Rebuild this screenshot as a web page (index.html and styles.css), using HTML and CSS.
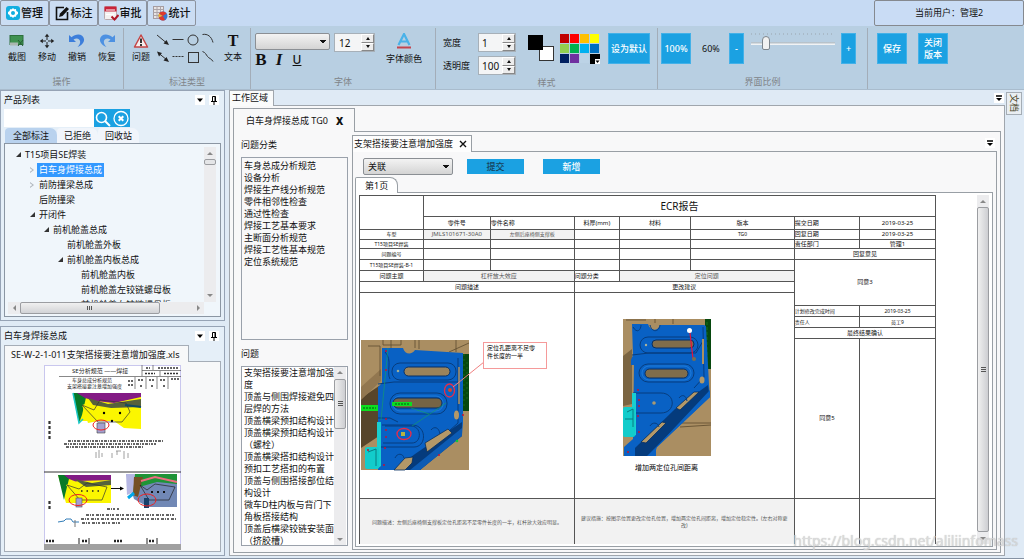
FILE: index.html
```html
<!DOCTYPE html>
<html lang="zh-CN">
<head>
<meta charset="utf-8">
<meta name="viewport" content="width=device-width, initial-scale=1">
<title>问题标注管理</title>
<link rel="stylesheet" href="styles.css">
</head>
<body>
<header class="topbar">
  <nav class="modules">
    <button class="module" type="button"><svg width="14" height="14" viewBox="0 0 14 14"><rect width="14" height="14" rx="3" fill="#12aee0"/><path d="M7 2l1.200 1.200 1.800-.1.3 1.800L12 6v2l-1.600 1-.4 1.800-1.800 0L7 12l-1.200-1.200-1.800 0L3.600 9 2 8V6l1.600-1L4 3.200l1.800 0z" fill="#fff"/><circle cx="7" cy="7" r="2" fill="#12aee0"/></svg>管理</button>
    <button class="module" type="button"><svg width="15" height="15" viewBox="0 0 15 15"><path d="M9 1.500H1.500v12h11V6" fill="none" stroke="#111" stroke-width="1.600"/><path d="M4 11l1-3.500L11.500 1l2.500 2L7.500 10z" fill="#111"/></svg>标注</button>
    <button class="module" type="button"><svg width="15" height="15" viewBox="0 0 15 15"><rect x=".5" y=".5" width="12" height="13" rx="1" fill="#f4f1f1" stroke="#b9a9ad"/><path d="M.5.500h12v5H.5z" fill="#c9223a"/><path d="M2 4h9M2 8.500h8" stroke="#fff"/><path d="M7.500 10.500l3 3 4-4.500" fill="none" stroke="#b01527" stroke-width="2"/></svg>审批</button>
    <button class="module" type="button"><svg width="15" height="15" viewBox="0 0 15 15"><rect x=".5" y=".5" width="10" height="12" fill="#e8e4e4" stroke="#a59ca0"/><path d="M.5 3.500h10M.5 6.500h10M.5 9.500h10M4 .5v12M7.500.5v12" stroke="#aca4a8"/><circle cx="10" cy="10" r="4.500" fill="#3a78d0"/><path d="M10 10L6 7.500a4.500 4.500 0 0 0-.3 4z" fill="#f0b431"/><path d="M10 10l-4.300 1.500A4.500 4.500 0 0 0 12 14z" fill="#df3a2c"/><path d="M10 10L6 7.500a4.500 4.500 0 0 1 7.500 0z" fill="#df3a2c"/></svg>统计</button>
  </nav>
  <button class="user" type="button">当前用户：管理2</button>
</header>

<section class="ribbon">
  <div class="group group-edit">
    <div class="tools">
      <button class="tool" type="button"><svg width="16" height="16" viewBox="0 0 16 16"><rect x="1" y="2.500" width="13" height="9" fill="#3f9150" stroke="#2d6f3c"/><path d="M1 9.500h8v3H1z" fill="#aab7b0"/><path d="M9 7l5 6M14 7l-5 6" stroke="#265c34"/></svg>截图</button>
      <button class="tool" type="button"><svg width="16" height="16" viewBox="0 0 16 16"><path d="M8 2v12M2 8h12" stroke="#222" stroke-dasharray="5 2"/><path d="M8 .8l2.300 3H5.700zM8 15.200l2.300-3H5.700zM.8 8l3-2.300v4.600zM15.200 8l-3-2.300v4.600z" fill="#222"/></svg>移动</button>
      <button class="tool" type="button"><svg width="18" height="16" viewBox="0 0 18 16"><path d="M1 2v7h7L5.500 6.500C9 4 13 6 12 10c-.4 1.700-1.500 3-2.500 4 4-1.500 7-4.500 6.500-8C15.400 1 8.500-.5 3.500 4.300z" fill="#3c7edb"/></svg>撤销</button>
      <button class="tool" type="button"><svg width="18" height="16" viewBox="0 0 18 16"><path d="M17 2v7h-7l2.500-2.500C9 4 5 6 6 10c.4 1.700 1.500 3 2.500 4C4.500 12.500 1.500 9.500 2 6 2.600 1 9.500-.5 14.500 4.300z" fill="#4d91e2"/></svg>恢复</button>
    </div>
    <div class="caption">操作</div>
  </div>
  <div class="group group-mark">
    <div class="tools">
      <button class="tool" type="button"><svg width="16" height="16" viewBox="0 0 16 16"><path d="M8 2l6.500 12h-13z" fill="#f5eded" stroke="#c44545" stroke-width="1.500" stroke-linejoin="round"/><path d="M8 5.500v4.500M8 11v2" stroke="#222" stroke-width="1.800"/></svg>问题</button>
      <div class="shapes">
        <button type="button" aria-label="箭头"><svg width="14" height="14" viewBox="0 0 14 14"><path d="M1 2l9 7.500" stroke="#333"/><path d="M13 12L7.500 10.500l3-3.500z" fill="#222"/></svg></button>
        <button type="button" aria-label="直线"><svg width="14" height="14" viewBox="0 0 14 14"><path d="M1.500 6.500h11" stroke="#333"/></svg></button>
        <button type="button" aria-label="圆"><svg width="14" height="14" viewBox="0 0 14 14"><circle cx="7" cy="7" r="5" fill="none" stroke="#333"/></svg></button>
        <button type="button" aria-label="弧线"><svg width="14" height="14" viewBox="0 0 14 14"><path d="M1.500 1.500c5-1 9 2 10.500 8" fill="none" stroke="#333"/></svg></button>
        <button type="button" aria-label="双向箭头"><svg width="14" height="14" viewBox="0 0 14 14"><path d="M3 3.500l8 6.500" stroke="#333"/><path d="M13 12L7.500 10.500l3-3.500zM1 1.500l5 1.500-3 3.500z" fill="#222"/></svg></button>
        <button type="button" aria-label="虚线"><svg width="14" height="14" viewBox="0 0 14 14"><path d="M1.500 6.500h11" stroke="#333" stroke-dasharray="2 1"/></svg></button>
        <button type="button" aria-label="矩形"><svg width="14" height="14" viewBox="0 0 14 14"><rect x="2.500" y="2.500" width="10" height="10" fill="none" stroke="#333"/></svg></button>
        <button type="button" aria-label="曲线"><svg width="14" height="14" viewBox="0 0 14 14"><path d="M1.500 1.500c3 1 3.500 3 5 5s4 2 5.500 5" fill="none" stroke="#333"/></svg></button>
      </div>
      <button class="tool" type="button"><span class="serif-t">T</span>文本</button>
    </div>
    <div class="caption">标注类型</div>
  </div>
  <div class="group group-font">
    <div class="tools">
      <div class="font-box">
        <div class="inline">
          <select class="combo font-name" aria-label="字体"><option></option></select>
          <span class="spin"><input type="text" value="12" aria-label="字号"><span class="steps"><button type="button" aria-label="增大"></button><button type="button" class="down" aria-label="减小"></button></span></span>
        </div>
        <div class="biu"><button type="button"><b>B</b></button><button type="button"><i>I</i></button><button type="button" class="under"><u>U</u></button></div>
      </div>
      <button class="tool font-color" type="button"><svg width="16" height="16" viewBox="0 0 16 16"><path d="M2.500 12L8 1l5.500 11M4.500 8.500h7" fill="none" stroke="#4ab2e8" stroke-width="2.200"/><path d="M1 14.500h14" stroke="#c3454f" stroke-width="2"/></svg>字体颜色</button>
    </div>
    <div class="caption">字体</div>
  </div>
  <div class="group group-style">
    <div class="tools">
      <div class="measures">
        <label for="w">宽度</label><span class="spin"><input id="w" type="text" value="1"><span class="steps"><button type="button" aria-label="增大"></button><button type="button" class="down" aria-label="减小"></button></span></span>
        <label for="o">透明度</label><span class="spin"><input id="o" type="text" value="100"><span class="steps"><button type="button" aria-label="增大"></button><button type="button" class="down" aria-label="减小"></button></span></span>
      </div>
      <svg class="fore-back" width="27" height="27" viewBox="0 0 27 27"><rect x="11.500" y="11.500" width="14" height="14" fill="#fff" stroke="#333"/><rect width="15" height="15" fill="#000"/></svg>
      <div class="swatches">
        <button type="button" class="c1" aria-label="深红"></button><button type="button" class="c2" aria-label="红"></button><button type="button" class="c3" aria-label="橙"></button><button type="button" class="c4" aria-label="黄"></button>
        <button type="button" class="c5" aria-label="浅绿"></button><button type="button" class="c6" aria-label="绿"></button><button type="button" class="c7" aria-label="浅蓝"></button><button type="button" class="c8" aria-label="蓝"></button>
        <button type="button" class="c9" aria-label="深蓝"></button><button type="button" class="c10" aria-label="紫"></button><button type="button" class="c11" aria-label="透明"></button><button type="button" class="c12" aria-label="更多颜色"><svg width="10" height="10" viewBox="0 0 10 10"><rect width="10" height="10" fill="#000"/><rect x="5" y="5" width="5" height="5" fill="#fff"/><path d="M5.500 6.500h4l-2 2.500z"/></svg></button>
      </div>
      <button class="blue wide" type="button">设为默认</button>
    </div>
    <div class="caption">样式</div>
  </div>
  <div class="group group-zoom">
    <div class="tools">
      <button class="blue" type="button">100%</button>
      <output class="percent">60%</output>
      <button class="blue thin" type="button">-</button>
      <input class="slider" type="range" min="0" max="100" value="14" aria-label="界面比例">
      <button class="blue thin" type="button">+</button>
    </div>
    <div class="caption">界面比例</div>
  </div>
  <div class="group group-save">
    <div class="tools">
      <button class="blue" type="button">保存</button>
      <button class="blue" type="button">关闭<br>版本</button>
    </div>
  </div>
</section>

<main class="workspace">
  <aside class="side">
    <section class="panel">
      <div class="panel-head"><h2>产品列表</h2>
        <button class="mini" type="button" aria-label="菜单"><svg width="10" height="10" viewBox="0 0 10 10"><path d="M2 3.500h6L5 7z"/></svg></button>
        <button class="mini" type="button" aria-label="固定"><svg width="10" height="10" viewBox="0 0 10 10"><path d="M3.500 6V1.500h3V6M2 6.500h6M5 6.500V10" fill="none" stroke="#000"/><path d="M6 1.500V6" stroke="#000"/></svg></button>
      </div>
      <div class="search"><input type="text" aria-label="搜索"><button type="button" aria-label="搜索"><svg width="18" height="17" viewBox="0 0 18 17"><circle cx="7.500" cy="7.500" r="5" fill="none" stroke="#fff" stroke-width="1.600"/><path d="M11 11l5 5" stroke="#fff" stroke-width="2"/></svg></button><button type="button" aria-label="清除"><svg width="18" height="17" viewBox="0 0 18 17"><circle cx="9" cy="8.500" r="7" fill="none" stroke="#fff" stroke-width="1.300"/><path d="M6.700 6.200l4.600 4.600M11.300 6.200l-4.600 4.600" stroke="#fff" stroke-width="2"/></svg></button></div>
      <div class="pills" role="tablist"><button class="on" type="button" role="tab">全部标注</button><button type="button" role="tab">已拒绝</button><button type="button" role="tab">回收站</button></div>
      <div class="tree-box">
        <ul class="tree">
          <li><span class="node open">T15项目SE焊装</span>
            <ul>
              <li><span class="node closed"><mark>白车身焊接总成</mark></span></li>
              <li><span class="node closed">前防撞梁总成</span></li>
              <li><span class="node">后防撞梁</span></li>
              <li><span class="node open">开闭件</span>
                <ul>
                  <li><span class="node open">前机舱盖总成</span>
                    <ul>
                      <li><span class="node">前机舱盖外板</span></li>
                      <li><span class="node open">前机舱盖内板总成</span>
                        <ul>
                          <li><span class="node">前机舱盖内板</span></li>
                          <li><span class="node">前机舱盖左铰链螺母板</span></li>
                          <li><span class="node">前机舱盖右铰链螺母板</span></li>
                        </ul>
                      </li>
                    </ul>
                  </li>
                </ul>
              </li>
            </ul>
          </li>
        </ul>
        <div class="vbar tree-v"><i class="up"></i><b></b><i class="dn"></i></div>
        <div class="hbar"><i class="lt"></i><b></b><i class="rt"></i></div>
      </div>
    </section>

    <section class="panel">
      <div class="panel-head"><h2>白车身焊接总成</h2>
        <button class="mini" type="button" aria-label="菜单"><svg width="10" height="10" viewBox="0 0 10 10"><path d="M2 3.500h6L5 7z"/></svg></button>
        <button class="mini" type="button" aria-label="固定"><svg width="10" height="10" viewBox="0 0 10 10"><path d="M3.500 6V1.500h3V6M2 6.500h6M5 6.500V10" fill="none" stroke="#000"/><path d="M6 1.500V6" stroke="#000"/></svg></button>
      </div>
      <div class="file-tab">SE-W-2-1-011支架搭接要注意增加强度.xls</div>
      <div class="preview">
        <svg width="137" height="185" viewBox="0 0 137 185">
          <rect x=".5" y=".5" width="136" height="184" fill="#fff" stroke="#c9c7ee"/>
          <rect y="179" width="137" height="6" fill="#a0a0a0"/>
          <g class="doc-text"><text x="28" y="8" font-size="6">SE分析规范 ——焊接</text><text x="28" y="17" font-size="5">车身总成分析规范</text><text x="23" y="23" font-size="5">支架搭接要注意增加强度</text></g>
          <path d="M15 11.500h122M98 0v11M98 5.500h39M109 0v5M116 6v5M91 12v12M102 12v12M113 12v12M124 12v12" stroke="#555" stroke-width=".7" fill="none"/>
          <path d="M102 3h4M114 3h20M101 8.500h10M120 8.500h14M84 16h5M94 15h6M105 15h6M116 15h6M127 14h8M84 20h5M96 21h2M107 21h2M119 21h2" stroke="#333" stroke-width="1.400" stroke-dasharray="2 1"/>
          <g>
            <path d="M29 28h68v28H35z" fill="#fbf600"/>
            <path d="M29 28h14l-5 22-3 8z" fill="#087a28"/>
            <path d="M33 28h64v9l-36 2-20-6z" fill="#831b85"/>
            <path d="M29 28l6 30 4-4" fill="none" stroke="#1dc8c8" stroke-width="1.500"/>
            <path d="M38 40l14-4 18 2 27-6v32l-17-1-10-7H54l-10 2z" fill="#fbf600"/>
            <path d="M44 33l20 6 33-5v8l-30 1-18-3" fill="#57623c"/>
            <path d="M38 40l16 17h24l8-10-4-9-26-3-6 10z" fill="none" stroke="#333" stroke-width=".7"/>
            <circle cx="60" cy="48" r="1.200"/><circle cx="76" cy="48" r="1.200"/><circle cx="68" cy="56" r="1.200"/><path d="M81 40l16 2" stroke="#124b63" stroke-width="2"/>
            <path d="M53 58h8v10h-8z" fill="#a4a0d0" stroke="#444" stroke-width=".6"/>
            <ellipse cx="57" cy="60" rx="8" ry="5" fill="none" stroke="#f02020"/>
          </g>
          <path d="M24 76h95M20 79h92M22 82h78" stroke="#333" stroke-width="1.600" stroke-dasharray="3 1 1 1 2 1"/>
          <path d="M52 87v6M55 85v8M58 88v4M68 88v5M72 86h5M73 86v4M80 86v8M84 88v5" stroke="#888" stroke-width=".8"/>
          <path d="M5.500 56v18M5.500 136v10" stroke="#333" stroke-width="2.200" stroke-dasharray="3 2"/>
          <path d="M0 107h137" stroke="#333"/>
          <g>
            <path d="M14 110h53v28H22z" fill="#fbf600"/><path d="M14 110h12l-5 20-1 5z" fill="#087a28"/><path d="M20 110h47v7l-26 3-16-6z" fill="#831b85"/>
            <path d="M22 120l12-4 33-1v22H40l-10-4z" fill="#fbf600"/><path d="M30 114l18 4 19-3v5l-25 2z" fill="#57623c"/>
            <path d="M23 120l13 15h22l5-13-20-4-8 6z" fill="none" stroke="#333" stroke-width=".7"/><path d="M37 126h18" stroke="#222" stroke-width="1.500" stroke-dasharray="1.500 4"/>
            <rect x="32" y="133" width="6" height="9" fill="#a4a0d0" stroke="#555" stroke-width=".6"/><ellipse cx="34" cy="135" rx="9" ry="5.500" fill="none" stroke="#f02020"/>
          </g>
          <path d="M67 123.500h10" stroke="#111"/><path d="M80 123.500l-4-2v4z"/>
          <g>
            <path d="M82 109h51v33H104l-14-8z" fill="#7188b5"/><path d="M82 109h10v17l-9 4z" fill="#b6b7e2"/><path d="M91 109h42v10l-20-2-18 5-6 8z" fill="#1e9436"/><path d="M90 112h9l-5 20-5-2z" fill="#765024"/>
            <path d="M97 116l14-4 22 5" fill="none" stroke="#ee6c80" stroke-width="2"/><path d="M84 133l6-5" stroke="#00a7e8" stroke-width="3"/>
            <path d="M96 120l9 15h20l6-13-20-3-8 6z" fill="none" stroke="#222" stroke-width=".7"/><path d="M107 127h18" stroke="#111" stroke-width="2" stroke-dasharray="2 4"/>
            <rect x="100" y="133" width="5" height="10" fill="#18406a"/><ellipse cx="103" cy="135" rx="9" ry="6" fill="none" stroke="#f02020"/>
          </g>
          <path d="M42 150h88M37 154h95M38 158h40M63 144h12" stroke="#333" stroke-width="1.400" stroke-dasharray="3 1 1 1 2 2"/>
          <path d="M14 157l6-1 2-2h5l2 3h6" fill="none" stroke="#327db8"/><path d="M31 155v7" stroke="#777"/>
          <path d="M35 173v6M45 173v6M103 173v6M113 173v6" stroke="#222"/><path d="M2 176h9M38 176h5M70 176h8M105 176h5" stroke="#222" stroke-width="2.500" stroke-dasharray="2 1"/>
        </svg>
      </div>
    </section>
  </aside>

  <section class="area">
    <div class="area-tabs"><span class="area-tab">工作区域</span><button class="overflow" type="button" aria-label="更多"><svg width="10" height="10" viewBox="0 0 10 10"><path d="M2 3h6" stroke="#000" stroke-width="1.500"/><path d="M2 5h6L5 8z"/></svg></button></div>
    <div class="area-body">
      <div class="doc-tab">白车身焊接总成 TG0<button type="button" aria-label="关闭">X</button></div>
      <div class="doc-body">
        <div class="lists">
          <h3>问题分类</h3>
          <ul class="listbox">
            <li>车身总成分析规范</li><li>设备分析</li><li>焊接生产线分析规范</li><li>零件相邻性检查</li><li>通过性检查</li><li>焊接工艺基本要求</li><li>主断面分析规范</li><li>焊接工艺性基本规范</li><li>定位系统规范</li>
          </ul>
          <h3>问题</h3>
          <div class="listbox scrolled">
            <ul>
              <li>支架搭接要注意增加强度</li><li>顶盖与侧围焊接避免四层焊的方法</li><li>顶盖横梁预扣结构设计</li><li>顶盖横梁预扣结构设计（螺栓）</li><li>顶盖横梁搭扣结构设计</li><li>预扣工艺搭扣的布置</li><li>顶盖与侧围搭接部位结构设计</li><li>微车D柱内板与背门下角板搭接结构</li><li>顶盖后横梁铰链安装面（挤胶槽）</li>
            </ul>
            <div class="vbar list-v"><i class="up"></i><b></b><i class="dn"></i></div>
          </div>
        </div>

        <div class="issue">
          <div class="issue-tabs"><span class="issue-tab">支架搭接要注意增加强度<button type="button" aria-label="关闭"><svg width="8" height="8" viewBox="0 0 8 8"><path d="M1 1l6 6M7 1L1 7" stroke="#111" stroke-width="1.400"/></svg></button></span><button class="overflow" type="button" aria-label="更多"><svg width="10" height="10" viewBox="0 0 10 10"><path d="M2 3h6" stroke="#000" stroke-width="1.500"/><path d="M2 5h6L5 8z"/></svg></button></div>
          <div class="issue-body">
            <div class="actions"><select class="combo" aria-label="关联"><option>关联</option></select><button class="act dark" type="button">提交</button><button class="act" type="button">新增</button></div>
            <div class="page-tab">第1页</div>
            <div class="page">
              <div class="sheet">
                <table>
                  <colgroup><col class="k1"><col class="k2"><col class="k3"><col class="k4"><col class="k5"><col class="k6"><col class="k7"><col class="k8"></colgroup>
                  <tr class="h21"><td rowspan="2"></td><th class="title" colspan="7">ECR报告</th></tr>
                  <tr class="h13"><td>零件号</td><td class="l">零件名称</td><td>料厚(mm)</td><td>材料</td><td>版本</td><td class="l">提交日期</td><td>2019-03-25</td></tr>
                  <tr class="h10"><td class="s">车型</td><td class="g">JMLS101671-30A0</td><td class="g s">左侧后座椅侧支撑板</td><td></td><td></td><td class="s">TG0</td><td class="l">回复日期</td><td>2019-03-25</td></tr>
                  <tr class="h9"><td class="s">T15项目SE焊装</td><td></td><td></td><td></td><td></td><td></td><td class="l">责任部门</td><td>管理1</td></tr>
                  <tr class="h11"><td class="s">问题编号</td><td></td><td></td><td></td><td></td><td></td><td colspan="2">回复意见</td></tr>
                  <tr class="h11"><td class="s">T15项目SE焊装-B-1</td><td></td><td></td><td></td><td></td><td></td><td colspan="2" rowspan="4">同意3</td></tr>
                  <tr class="h11"><td>问题主题</td><td class="g" colspan="2">杠杆放大效应</td><td class="l">问题分类</td><td class="g" colspan="2">定位问题</td></tr>
                  <tr class="h11"><td colspan="3">问题描述</td><td colspan="3">更改建议</td></tr>
                  <tr class="h13">
                    <td class="pic" colspan="3" rowspan="5">
                      <svg width="213" height="204" viewBox="0 0 213 204">
                        <g transform="translate(1 47)">
                          <rect width="108" height="130" fill="#aa8e62"/>
                          <path d="M0 58l18-12v50L0 108z" fill="#57452b"/><path d="M0 47l20-18v12L0 60z" fill="#927750"/>
                          <path d="M7 6h12v30M30 0v8M54 0v8M58 0v9M88 12l20-9M95 0v12M22 0v5h18V0" fill="none" stroke="#5e4c30" stroke-width=".8"/>
                          <path d="M101 14h7v57h-7z" fill="#07480e"/><path d="M103 14v54M106 22v40" stroke="#146b1b" stroke-dasharray="2 3"/>
                          <path d="M21 8l21 0c2 7 9 7 12 2l48 3v70l-1 12-15 11-27 24H17V47l4-4z" fill="#0961c4"/>
                          <path d="M101 82L54 114 33 130h26l27-22 15-12z" fill="#053b7c"/><path d="M59 130l42-34v-8l-52 42z" fill="#0c5bb4"/>
                          <path d="M64 103l23-14 4 4-25 19zM33 130l11-12 8-1-1 6-7 7z" fill="#b39868" stroke="#062e60" stroke-width=".8"/>
                          <g fill="none" stroke="#073d7e"><rect x="31" y="23" width="64" height="17" rx="8"/><rect x="29" y="53" width="57" height="21" rx="10"/><rect x="32" y="56" width="50" height="15" rx="7" stroke="#2d8de8" stroke-width=".6"/><path d="M17 44l16-2h66M21 85h30c15 0 15 22 2 22H17M24 12c8 8 1 20 5 27M97 18v65l-9 8M24 86h26c11 0 11 17 1 17H22M17 78h12l8 4M70 90c3-4 8-3 9 4M34 118c2-5 8-5 9 0"/></g>
                          <rect x="43" y="27" width="46" height="9" rx="4.500" fill="#9a835b" stroke="#062f64"/><rect x="32" y="58" width="49" height="10" rx="5" fill="#756444" stroke="#062f64"/>
                          <path d="M98 27v37" stroke="#ad9160" stroke-width="1.500"/><ellipse cx="95.500" cy="75" rx="2.500" ry="4.500" fill="#b39868"/>
                          <path d="M16 82h4v44l-4 3z" fill="#19cfd0"/><rect x="4" y="107" width="14" height="22" rx="2" fill="#12cccb"/><path d="M7 112l8-3v17" fill="none" stroke="#087d82"/>
                          <path d="M27 8L20 80M85 63L51 86M50 68l18 6" stroke="#16a35f" stroke-width=".6"/>
                          <rect y="65" width="17" height="6" fill="#0cdd20"/><path d="M2 68h13" stroke="#07500e" stroke-dasharray="2 1"/><rect x="31" y="62" width="20" height="4" fill="#0cdd20"/><path d="M34 64h14" stroke="#07500e" stroke-dasharray="2 1"/>
                          <g fill="#c01334"><circle cx="25" cy="11" r="1"/><circle cx="25" cy="30" r="1"/><circle cx="25" cy="79" r="1"/><circle cx="25" cy="90" r="1"/><circle cx="25" cy="97" r="1"/><circle cx="24" cy="108" r="1"/><circle cx="23" cy="125" r="1"/><circle cx="78" cy="115" r="1"/><circle cx="102" cy="75" r="1"/><circle cx="7" cy="110" r="1"/></g><circle cx="96" cy="101" r="1.300" fill="#10c93b"/><circle cx="37" cy="31" r="1.300" fill="#9bae9b"/>
                          <rect x="40" y="92" width="4" height="4" fill="#b5b342"/><ellipse cx="43" cy="94" rx="7" ry="5.500" fill="none" stroke="#e82c48" stroke-width="1.300"/><circle cx="89" cy="50" r="2" fill="#e04020"/><ellipse cx="88.500" cy="50.500" rx="5" ry="6.500" fill="none" stroke="#e82c48" stroke-width="1.300"/>
                        </g>
                        <path d="M93 94l31-25" stroke="#f08080"/><rect x="123.500" y="49.500" width="63" height="26" fill="#fff" stroke="#f59a9a"/>
                        <text x="127" y="57" font-size="6">定位孔距离不足零</text><text x="127" y="65" font-size="6">件长度的一半</text>
                      </svg>
                    </td>
                    <td class="pic" colspan="3" rowspan="5">
                      <svg width="218" height="204" viewBox="0 0 218 204">
                        <g transform="translate(48 26)">
                          <rect width="88" height="137" fill="#aa8e62"/>
                          <path d="M0 37l9-7v55l-9 2z" fill="#7b6542"/><path d="M3 1h20M32 0v4M50 0v5M57 104h31M57 108l31-2" fill="none" stroke="#6c5737"/>
                          <path d="M82 0h6v50h-6z" fill="#07480e"/><path d="M84 3v44" stroke="#176e1d" stroke-dasharray="3 2"/>
                          <path d="M9 5h16c2 7 10 8 12 1l44 0 2 1 3 59 1 12-53 50-3 9H1v-9l9-8 1-74H8V41l2-5z" fill="#0961c4"/>
                          <path d="M85 66L52 90 12 129v8h12l33-33 29-30z" fill="#053b7c"/><path d="M33 137l0-8 54-51v-7L25 137z" fill="#0a62c4"/>
                          <path d="M53 89l18-16h5L57 91zM18 123l21-20 4 1-20 20z" fill="#b39868" stroke="#062e60" stroke-width=".8"/>
                          <g fill="none" stroke="#073d7e"><rect x="17" y="18" width="58" height="16" rx="8"/><rect x="16" y="45" width="55" height="18" rx="9"/><rect x="19" y="47" width="49" height="14" rx="7" stroke="#2d8de8" stroke-width=".6"/><path d="M9 36l17-2h47l7-12M10 74h28c15 0 15 20 0 20H12M27 6c2 8 9 7 10 0M80 8l1 50-10 11M10 8c4 7 8 3 8-2M56 79c3-4 7-3 8 3M27 107c2-4 8-4 9 1"/></g>
                          <rect x="29" y="21" width="42" height="8" rx="4" fill="#806d4b" stroke="#062f64"/><rect x="22" y="50" width="43" height="9" rx="4.500" fill="#806d4b" stroke="#062f64"/>
                          <path d="M80 20v25" stroke="#ad9160" stroke-width="2"/><ellipse cx="79" cy="61" rx="2.500" ry="3.500" fill="#b39868"/>
                          <path d="M9 74h4v42l-4 2z" fill="#19cfd0"/><rect y="88" width="12" height="30" rx="2" fill="#12cccb"/><path d="M4 93l6-3v18M2 100h8" fill="none" stroke="#087d82"/>
                          <path d="M67 14l3 26" stroke="#e5143c" stroke-width="1.200"/><circle cx="66.500" cy="11.500" r="2.500" fill="#fff"/><circle cx="71" cy="40" r="2" fill="#786d51"/><circle cx="31" cy="84" r="1.800" fill="#aa9a72"/><circle cx="23" cy="26" r="1.200" fill="#aab29a"/>
                          <g fill="#c01334"><circle cx="15" cy="71" r="1"/><circle cx="16" cy="81" r="1"/><circle cx="16" cy="87" r="1"/><circle cx="15" cy="97" r="1"/><circle cx="16" cy="113" r="1"/><circle cx="5" cy="133" r="1"/></g>
                        </g>
                        <text x="60" y="177" font-size="7">增加两定位孔间距离</text>
                      </svg>
                    </td>
                  </tr>
                  <tr class="h11"><td class="l s">计划修改完成时间</td><td class="s">2019-03-25</td></tr>
                  <tr class="h11"><td class="l s">责任人</td><td class="s">员工9</td></tr>
                  <tr class="h11"><td colspan="2">最终结果确认</td></tr>
                  <tr class="h160"><td>同意5</td><td></td></tr>
                  <tr class="h47"><td class="g s" colspan="3">问题描述：左侧后座椅侧支撑板定位孔距离不足零件长度的一半，杠杆放大效应明显。</td><td class="g s" colspan="3">建议措施：按图示位置更改定位孔位置，增加两定位孔间距离，增加定位稳定性。(左右对称更改)</td><td></td><td></td></tr>
                </table>
              </div>
              <div class="vbar page-v"><i class="up"></i><b></b><i class="dn"></i></div>
            </div>
          </div>
        </div>
      </div>
    </div>
  </section>

  <aside class="dock"><button type="button">文档</button></aside>
</main>
<div class="watermark">https://blog.csdn.net/aliliinfomass</div>
</body>
</html>
```
FILE: styles.css
```css
* { box-sizing: border-box; }
html, body { height: 100%; margin: 0; }
body {
  display: flex;
  flex-direction: column;
  position: relative;
  overflow: hidden;
  background: #dfeaf5;
  color: #111;
  font-family: "Noto Sans", "Noto Sans CJK SC", sans-serif;
  font-size: 9px;
  line-height: 12px;
}
button, input, select { font: inherit; color: inherit; margin: 0; padding: 0; }
button { border: 0; background: none; }
h2, h3 { margin: 0; font-size: 9px; font-weight: 400; }
ul { list-style: none; margin: 0; padding: 0; }
svg { display: block; flex: none; }
.inline { display: flex; gap: 4px; }

/* top bar */
.topbar { display: flex; justify-content: space-between; flex: none; height: 26px; background: #c6daf3; }
.modules { display: flex; }
.module {
  display: flex; align-items: center; justify-content: center; gap: 1px;
  width: 49px; height: 26px;
  border: 1px solid #8c939e; border-radius: 2px;
  background: #cbddf3; font-size: 11px; font-weight: 500;
}
.user { width: 150px; border: 1px solid #85898f; border-radius: 2px; background: #c9dcf5; }

/* ribbon */
.ribbon { display: flex; flex: none; height: 64px; padding-top: 2px; background: #b8cfe2; border-bottom: 1px solid #a9bccd; }
.group { display: flex; flex-direction: column; justify-content: space-between; border-right: 1px solid #a3adb8; padding-top: 5px; }
.group-edit { width: 124px; }
.group-mark { width: 127px; }
.group-font { width: 185px; }
.group-style { width: 222px; }
.group-zoom { width: 210px; }
.group-save { flex: 1; border-right: 0; }
.tools { display: flex; align-items: flex-start; }
.caption { text-align: center; color: #808488; line-height: 15px; }
.tool { display: flex; flex-direction: column; align-items: center; gap: 1px; width: 30px; line-height: 14px; }
.group-edit .tools { padding-left: 2px; }
.group-mark .tools { padding-left: 2px; }
.shapes { display: grid; grid-template-columns: repeat(4, 15px); row-gap: 3px; width: 60px; }
.group-mark .tool:first-child { width: 30px; }
.group-mark .tool:last-child { width: 34px; }
.serif-t { font: bold 16px/16px "Liberation Serif", serif; }
.combo {
  appearance: none;
  width: 90px; height: 17px; padding: 0 4px;
  border: 1px solid #8b8f94; border-radius: 2px;
  background:
    linear-gradient(to bottom right, #111 50%, transparent 51%) right 3px center / 3px 4px no-repeat,
    linear-gradient(to bottom left, #111 50%, transparent 51%) right 6px center / 3px 4px no-repeat,
    linear-gradient(#f3f3f3, #d4d4d4);
}
.combo.font-name { width: 75px; }
.group-font .tools { padding-left: 4px; }
.group-font .tool { width: 40px; margin-left: 9px; gap: 3px; }
.spin { display: flex; width: 41px; height: 19px; border: 1px solid #a7b0b8; background: #f4f5f6; }
.spin input { flex: 1; min-width: 0; border: 0; padding-left: 4px; background: none; font-size: 10px; }
.steps { display: flex; flex-direction: column; flex: none; width: 13px; }
.steps button { flex: 1; border: 1px solid; border-color: #fff #888 #888 #fff; background: #ececec; display: grid; place-items: center; }
.steps button::before { content: ""; border: 2px solid transparent; border-top: 0; border-bottom: 3px solid #111; }
.steps .down::before { border-top: 3px solid #111; border-bottom: 0; }
.biu { display: flex; gap: 6px; font: 700 17px/16px "Liberation Serif", serif; }
.biu button { width: 12px; font: inherit; }
.biu .under { font: 500 12px/16px "Noto Sans", sans-serif; }
.measures { display: grid; grid-template-columns: 35px 38px; row-gap: 4px; align-items: center; padding-left: 7px; }
.measures .spin { width: 38px; }
.measures .spin input { padding-left: 3px; }
.fore-back { margin: 2px 0 0 12px; }
.swatches { display: grid; grid-template-columns: repeat(4, 9px); grid-auto-rows: 9px; gap: 1px; margin: 1px 0 0 5px; }
.c1 { background: #c00000; } .c2 { background: #ff0000; } .c3 { background: #ffc000; } .c4 { background: #ffff00; }
.c5 { background: #92d050; } .c6 { background: #00b050; } .c7 { background: #00b0f0; } .c8 { background: #0070c0; }
.c9 { background: #002060; } .c10 { background: #7030a0; } .c11 { background: #bcd3e6; } .c12 { background: #000; }
.blue { width: 30px; height: 31px; flex: none; background: #1ba1e2; color: #fff; font-weight: 500; border: 1px solid #43b1e8; }
.blue.wide { width: 42px; margin-left: 9px; }
.blue.thin { width: 15px; }
.group-zoom .tools { padding-left: 3px; }
.percent { width: 38px; padding-left: 11px; line-height: 31px; }
.slider {
  appearance: none; width: 84px; height: 18px; margin: 0 6px 0 7px;
  background:
    linear-gradient(#a9b6c0, #fff) left 9px / 100% 3px no-repeat,
    repeating-linear-gradient(90deg, #a9bac8 0 1px, transparent 1px 4px) 0 0 / 100% 2px no-repeat;
}
.slider::-webkit-slider-thumb { appearance: none; width: 8px; height: 14px; margin-top: 1px; border: 1px solid #7d858c; border-radius: 4px 4px 2px 2px; background: #f1f1f1; }
.group-save .tools { gap: 11px; padding-left: 9px; }

/* workspace */
.workspace { display: flex; flex: 1; min-height: 0; padding-bottom: 2px; border-bottom: 1px solid #8592a3; }
.side { display: flex; flex-direction: column; gap: 5px; width: 225px; flex: none; }
.panel { display: flex; flex-direction: column; flex: 1; min-height: 0; padding: 0 3px 3px; border: 1px solid #96a3b5; background: #e5eff8; }
.panel-head { display: flex; align-items: center; gap: 4px; flex: none; height: 18px; padding-right: 2px; }
.panel-head h2 { flex: 1; }
.mini { width: 10px; height: 10px; background: #fff; }
.search { display: flex; flex: none; height: 18px; width: 126px; background: #1ba1e2; }
.search input { flex: 1; min-width: 0; border: 0; background: #fff; }
.pills { display: flex; flex: none; padding: 1px 0 0 1px; }
.pills button { height: 15px; padding: 0 7px; background: #f1f5fb; border-radius: 4px 7px 0 0; }
.pills .on { padding: 0 8px; background: #b9d2ee; }
.tree-box {
  display: grid; grid-template: 1fr 12px / 1fr 13px; flex: 1; min-height: 0;
  padding: 3px 3px 2px; border: 1px solid #8b96a3; background: #f0f6fb;
}
.tree { overflow: hidden; min-height: 0; padding-left: 5px; }
.tree ul { padding-left: 14px; }
.node { position: relative; display: block; padding-left: 12px; line-height: 15px; white-space: nowrap; }
.node mark { display: inline-block; margin-left: -2px; padding: 0 2px; line-height: 14px; background: #3399ff; color: #fff; }
.node::before { position: absolute; left: 3px; top: 5px; }
.open::before { content: ""; border-left: 5px solid transparent; border-bottom: 5px solid #333; }
.closed::before { content: ""; width: 4px; height: 6px; background: #b0b6bd; clip-path: polygon(0 0, 100% 50%, 0 100%, 0 80%, 60% 50%, 0 20%); }

/* scroll bars */
.vbar { display: flex; flex-direction: column; align-items: center; width: 12px; background: #ececee; }
.vbar b, .hbar b { display: block; border: 1px solid #9b9da1; border-radius: 2px; background: #e4e5e7; }
.vbar b { width: 12px; }
.vbar .dn { margin-top: auto; }
.vbar i, .hbar i { display: grid; place-items: center; width: 12px; height: 12px; flex: none; }
.vbar i::before, .hbar i::before { content: ""; border: 3px solid transparent; }
.vbar .up::before { border-top: 0; border-bottom-color: #888; }
.vbar .dn::before { border-bottom: 0; border-top-color: #888; }
.hbar .lt::before { border-left: 0; border-right-color: #888; }
.hbar .rt::before { border-right: 0; border-left-color: #888; }
.hbar { display: flex; align-items: center; background: #ececee; }
.hbar b { width: 140px; height: 12px; background: repeating-linear-gradient(90deg, #555 0 1px, transparent 1px 2px) center / 6px 4px no-repeat, linear-gradient(#f0f0f0, #d2d3d6); }
.hbar .rt { margin-left: auto; }
.tree-v b { height: 6px; }
.list-v b { height: 50px; background: repeating-linear-gradient(#555 0 1px, transparent 1px 2px) center / 5px 6px no-repeat, linear-gradient(90deg, #f0f0f0, #cdced2); }
.page-v b { flex: 1; background: repeating-linear-gradient(#555 0 1px, transparent 1px 2px) center / 5px 6px no-repeat, linear-gradient(90deg, #f0f0f0, #cdced2); }

/* document preview */
.file-tab { align-self: flex-start; height: 17px; padding: 0 9px 0 6px; margin-bottom: -1px; z-index: 1; border: 1px solid #a5adb7; border-bottom: 0; background: #f7f8f9; line-height: 17px; }
.preview { flex: 1; min-height: 0; padding: 3px 0 0; display: flex; justify-content: center; align-items: flex-start; overflow: hidden; border: 1px solid #a5adb7; background: #f7f8f9; }
.doc-text { fill: #222; }

/* work area */
.area { display: flex; flex-direction: column; flex: 1; min-width: 0; margin-left: 4px; }
.area-tabs { display: flex; justify-content: space-between; align-items: flex-start; flex: none; height: 15px; }
.area-tab { z-index: 1; height: 16px; padding: 0 5px 0 2px; border: 1px solid #a0a6ad; border-bottom: 0; background: #fafbfb; line-height: 14px; }
.overflow { margin: 3px 1px 0 0; background: #fff; }
.area-body { display: flex; flex-direction: column; flex: 1; min-height: 0; padding: 2px 3px 2px; border: 1px solid #a0a6ad; background: #f8f8f9; }
.doc-tab { align-self: flex-start; z-index: 1; display: flex; align-items: center; gap: 8px; height: 24px; margin-bottom: -1px; padding: 0 11px 0 12px; border: 1px solid #999fa5; border-bottom: 0; background: #f8f8f9; }
.doc-tab button { font-weight: 900; font-size: 10px; }
.doc-body { display: flex; gap: 4px; flex: 1; min-height: 0; padding: 3px 3px 2px 7px; border: 1px solid #999fa5; }
.lists { display: flex; flex-direction: column; width: 107px; flex: none; padding-bottom: 4px; }
.lists h3 { flex: none; padding-bottom: 2px; line-height: 20px; }
.listbox { flex: 1 1 0; min-height: 0; overflow: hidden; border: 1px solid #9aa1ab; padding: 2px 2px 0; }
.lists h3:not(:first-child) { margin-top: 4px; }
.listbox.scrolled { display: flex; padding: 0 1px 0 2px; background: #fff; }
.scrolled ul { flex: 1; min-width: 0; word-break: break-all; }
.list-v { flex: none; }

.issue { display: flex; flex-direction: column; flex: 1; min-width: 0; }
.issue-tabs { display: flex; justify-content: space-between; flex: none; height: 16px; }
.issue-tab { z-index: 1; display: flex; align-items: center; gap: 6px; height: 17px; padding: 0 4px 0 1px; border: 1px solid #999fa5; border-bottom: 0; background: #fdfdfd; }
.issue-tabs .overflow { align-self: flex-start; margin-right: 2px; }
.issue-body { display: flex; flex-direction: column; flex: 1; min-height: 0; padding: 6px 3px 2px 2px; border: 1px solid #999fa5; background: #f8f8f9; }
.actions { display: flex; flex: none; padding-left: 8px; height: 19px; }
.act { width: 57px; height: 15px; margin: 1px 0 0 14px; background: #1ba1e2; color: #fff; font-weight: 500; }
.act + .act { margin-left: 19px; }
.act.dark { color: #17445c; }
.page-tab { align-self: flex-start; z-index: 1; flex: none; height: 16px; margin-bottom: -1px; padding: 0 9px; border: 1px solid #999fa5; border-bottom: 0; border-radius: 2px 8px 0 0; background: #fff; line-height: 16px; }
.page { display: flex; flex: 1; min-height: 0; padding: 2px 3px; border: 1px solid #999fa5; background: #fff; }
.sheet { flex: 1; min-width: 0; min-height: 0; overflow: hidden; margin-right: 41px; }
.page-v { flex: none; }

/* report */
table { width: 100%; table-layout: fixed; border-collapse: collapse; font-size: 6px; line-height: 7px; }
td, th { padding: 0; border: 1px solid #555; text-align: center; vertical-align: middle; white-space: nowrap; font-weight: 400; overflow: hidden; }
.title { font-size: 10px; line-height: 14px; }
.l { text-align: left; }
.s { font-size: 5px; }
.g { background: #f2f2f2; color: #555; }
.h47 td { white-space: normal; padding: 0 4px; }
.pic { vertical-align: top; }
.k1 { width: 11.1%; } .k2 { width: 11.6%; } .k3 { width: 14.6%; } .k4 { width: 7.8%; }
.k5 { width: 12.4%; } .k6 { width: 18%; } .k7 { width: 11.3%; } .k8 { width: 13.2%; }
.h21 { height: 21px; } .h13 { height: 13px; } .h11 { height: 11px; } .h10 { height: 10px; } .h9 { height: 9px; }
.h160 { height: 160px; } .h47 { height: 47px; }

.dock { width: 19px; flex: none; padding: 2px 2px 0 1px; }
.dock button { width: 16px; height: 23px; border: 1px solid #a5adb5; background: #e9eef2; color: #4a4628; writing-mode: vertical-rl; text-orientation: sideways; line-height: 14px; }
.watermark { position: absolute; right: 6px; bottom: 8px; font-size: 14px; line-height: 20px; color: #d4d4d4; text-shadow: 0 0 1px #aaa; opacity: .8; pointer-events: none; }
```
